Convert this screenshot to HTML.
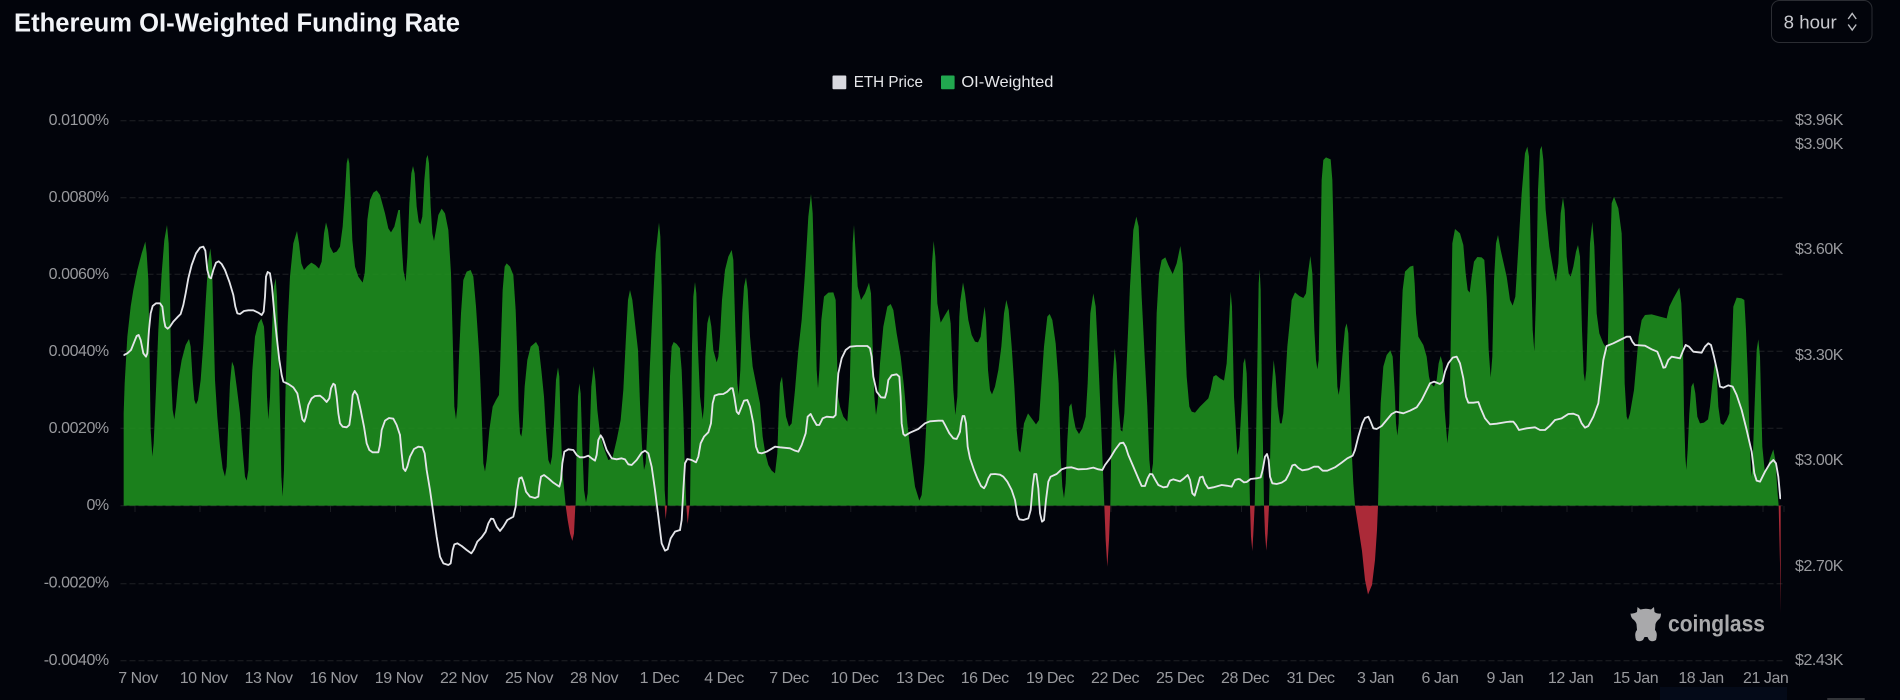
<!DOCTYPE html>
<html lang="en">
<head>
<meta charset="utf-8">
<title>Ethereum OI-Weighted Funding Rate</title>
<style>
html,body{margin:0;padding:0;width:1900px;height:700px;overflow:hidden;background:#02040b}
svg{display:block;position:absolute;left:0;top:0}
text{font-family:"Liberation Sans",sans-serif}
.ax{font-size:16px;fill:#98999d;letter-spacing:-.45px}
.ym{text-anchor:end}
.xm{text-anchor:middle}
.g{fill:#1f8e1f;fill-opacity:.9}
.r{fill:#ab2a39}
.w{fill:none;stroke:#e4e5e9;stroke-width:5.500;stroke-linejoin:round;stroke-linecap:round}
</style>
</head>
<body>
<svg width="1900" height="700" viewBox="0 0 1900 700" xmlns="http://www.w3.org/2000/svg">
<defs><filter id="soft" x="0" y="0" width="100%" height="100%"><feGaussianBlur stdDeviation="0.35"/></filter></defs>

<rect x="1660" y="687" width="127" height="13" fill="#040a18"/>
<rect x="1827" y="698" width="38" height="2" rx="1" fill="#333539"/>

<text x="14" y="31.700" font-size="25.500" font-weight="700" fill="#f2f4f8" textLength="446" lengthAdjust="spacingAndGlyphs">Ethereum OI-Weighted Funding Rate</text>

<rect x="1771.500" y="0.500" width="100.500" height="42" rx="8" fill="none" stroke="#2b2d33"/>
<text x="1783.700" y="28.300" font-size="18.500" fill="#c8c9ce" textLength="53" lengthAdjust="spacingAndGlyphs">8 hour</text>
<path d="M1848.200 19l4-5.500 4 5.500M1848.200 24.500l4 5.500 4-5.500" fill="none" stroke="#bcbdc2" stroke-width="1.400"/>

<rect x="832.500" y="75.500" width="13.800" height="13.800" rx="1" fill="#d9dae0"/>
<text x="853.700" y="87" font-size="16" fill="#e6e7ea" textLength="69.300" lengthAdjust="spacingAndGlyphs">ETH Price</text>
<rect x="941" y="75.500" width="13.600" height="13.800" rx="1" fill="#21a84f"/>
<text x="961.400" y="87" font-size="16" fill="#e6e7ea" textLength="92" lengthAdjust="spacingAndGlyphs">OI-Weighted</text>

<g fill="none" stroke="#1e2025" stroke-width="1" stroke-dasharray="6 3">
<path d="M120.500 120.700H1784.500"/><path d="M120.500 197.700H1784.500"/><path d="M120.500 274.300H1784.500"/><path d="M120.500 351.300H1784.500"/><path d="M120.500 428.300H1784.500"/><path d="M120.500 505.700H1784.500"/><path d="M120.500 583.700H1784.500"/><path d="M120.500 660.700H1784.500"/>
</g>
<path fill="none" stroke="#1a1c21" stroke-width="1" d="M135 506v6M200 506v6M265 506v6M330.500 506v6M395.500 506v6M460.500 506v6M525.500 506v6M590.500 506v6M655.500 506v6M720.700 506v6M785.700 506v6M850.800 506v6M915.900 506v6M981 506v6M1046 506v6M1111 506v6M1176 506v6M1241.500 506v6M1306.500 506v6M1371.500 506v6M1436.700 506v6M1501.700 506v6M1567 506v6M1632 506v6M1697 506v6M1763 506v6M1784 506v6"/>

<g filter="url(#soft)">
<g transform="translate(120,130) scale(.33333)">
<polygon class="g" points="11,1127 11,850 14,760 22,620 32,530 40,480 52,420 65,370 76,335 80,370 85,450 89,700 92,900 97,980 101,940 108,780 115,600 125,430 133,330 141,285 146,340 150,500 154,750 158,840 163,868 168,830 175,750 185,690 197,645 207,627 212,650 218,750 223,810 228,823 234,810 242,750 250,640 258,500 265,390 271,355 276,400 280,560 285,750 292,860 300,950 308,1015 315,1040 320,1010 324,900 330,760 336,695 342,710 350,770 360,850 368,960 375,1040 380,1052 385,1020 390,880 397,720 405,620 415,580 424,566 432,590 437,680 441,800 445,868 450,800 456,600 462,470 467,445 471,500 476,680 480,850 484,1040 488,1100 492,1020 497,760 503,580 510,440 520,340 531,303 537,340 544,400 552,420 562,408 574,398 586,405 597,416 605,395 612,310 618,277 624,300 630,350 640,369 650,365 660,350 668,290 675,190 680,100 684,82 688,100 692,200 697,330 705,410 715,440 728,458 734,430 738,370 742,270 750,210 760,188 770,181 780,195 795,250 805,295 813,307 823,290 835,240 840,240 840,1127"/>
</g>
<g transform="translate(400,130) scale(.33333)">
<polygon class="g" points="0,1127 0,247 5,340 10,420 17,455 22,380 28,220 34,130 39,108 44,130 50,230 56,275 61,283 67,260 73,150 79,85 83,75 87,100 92,230 97,310 102,333 108,300 115,255 125,236 135,250 145,300 153,430 158,620 163,830 168,868 172,830 177,680 183,550 190,450 200,425 212,420 220,440 228,530 238,680 245,850 250,1000 255,1025 260,990 268,900 278,830 288,810 297,795 300,720 308,480 314,410 320,400 330,410 340,435 347,540 352,680 356,840 360,910 364,920 368,890 374,770 382,690 392,650 408,636 416,650 424,720 432,800 438,900 445,990 451,1005 456,980 462,880 468,750 474,712 478,740 482,880 487,1020 493,1085 497,1127 527,1127 530,950 534,800 538,760 542,790 547,950 552,1080 558,1118 563,1090 568,950 574,770 581,708 586,750 592,840 600,910 610,950 625,990 637,985 650,930 662,870 670,780 678,620 684,510 690,480 697,510 706,590 714,660 720,820 726,950 732,1020 737,1000 742,900 750,700 758,530 767,370 777,278 781,320 785,470 790,830 794,1080 797,1127 803,1127 806,900 810,740 815,650 821,636 830,642 840,655 840,1127"/>
<polygon class="r" points="497,1127 503,1170 510,1210 517,1233 522,1210 526,1127"/>
<polygon class="r" points="794,1127 797,1168 801,1127"/>
</g>
<g transform="translate(680,130) scale(.33333)">
<polygon class="g" points="0,1127 0,660 5,720 10,850 14,1000 19,1127 30,1127 33,900 36,650 40,500 45,456 49,490 54,660 60,800 68,868 72,830 76,680 82,580 88,554 94,590 100,660 110,697 115,680 120,620 126,510 135,420 145,380 155,360 160,390 166,600 172,760 176,795 181,720 187,550 192,470 198,442 203,480 210,620 218,710 228,760 240,820 248,920 256,970 265,1005 275,1022 285,1030 292,970 296,850 300,760 306,740 311,790 318,860 327,890 335,880 345,780 355,660 365,570 375,430 385,260 393,192 398,250 404,470 410,720 414,775 418,720 424,570 432,500 445,488 460,487 467,510 471,680 474,800 480,830 490,860 502,875 509,780 513,600 518,340 522,285 527,370 533,470 543,510 555,490 567,458 573,490 578,650 583,800 588,855 593,820 600,700 610,590 622,530 632,522 640,540 650,610 662,680 672,770 682,880 692,970 705,1070 718,1112 725,1095 733,1000 742,820 750,600 756,400 761,333 766,380 772,520 782,578 795,555 806,537 812,580 820,780 826,855 832,800 838,560 840,530 840,1127"/>
<polygon class="r" points="19,1127 23,1182 29,1127"/>
</g>
<g transform="translate(960,130) scale(.33333)">
<polygon class="g" points="0,1127 0,520 9,457 15,490 25,570 35,615 45,635 54,637 62,620 68,570 74,530 78,570 84,720 90,780 96,793 105,770 115,720 124,650 132,550 139,510 146,540 155,650 163,770 170,900 176,960 181,968 186,930 192,880 204,850 215,865 228,883 237,870 243,780 252,650 262,560 269,552 277,570 287,640 296,760 302,980 307,1070 312,1105 317,1060 322,930 328,830 334,820 340,860 347,895 357,912 367,895 377,860 383,760 391,550 400,490 407,530 414,670 422,850 428,1000 433,1127 451,1127 453,1000 458,750 464,655 469,700 475,820 482,900 487,905 493,850 500,700 510,470 520,300 529,260 536,290 545,500 555,700 562,830 568,990 573,1040 579,1000 584,800 590,550 597,430 605,390 616,382 625,405 638,432 650,400 661,348 668,400 674,600 680,740 688,830 695,845 705,848 720,830 745,805 752,780 760,740 768,735 780,745 792,752 800,700 808,560 812,485 816,530 822,800 832,975 838,950 840,910 840,1127"/>
<polygon class="r" points="433,1127 437,1230 442,1310 447,1230 451,1127"/>
</g>
<g transform="translate(1240,130) scale(.33333)">
<polygon class="g" points="0,1127 0,910 5,820 10,700 15,684 20,730 25,900 30,1127 44,1127 47,1000 52,700 56,460 59,418 62,480 66,800 70,1000 72,1127 87,1127 90,1000 95,780 101,690 107,740 113,830 120,880 125,880 130,850 136,750 142,650 150,570 155,510 165,487 178,498 190,504 198,490 204,430 211,378 217,430 223,600 228,690 232,718 236,690 241,400 245,150 250,90 258,82 272,88 277,150 283,400 288,650 292,770 296,795 300,770 307,680 315,595 320,580 325,610 330,800 335,960 340,1060 345,1127 414,1127 417,1000 422,820 430,710 440,675 451,661 458,680 464,780 468,880 472,917 476,880 480,680 488,480 495,425 510,410 520,407 524,460 528,550 535,620 550,645 560,680 567,740 572,760 582,770 590,750 596,700 602,678 608,700 614,840 622,940 628,880 632,650 637,340 645,297 660,310 670,345 677,430 683,480 689,488 695,440 702,395 712,381 725,382 733,390 740,500 746,660 752,743 757,680 762,450 768,340 774,315 782,360 800,440 810,510 810,1127"/>
<polygon class="r" points="30,1127 33,1220 37,1263 40,1210 44,1127"/>
<polygon class="r" points="72,1127 75,1210 79,1262 83,1210 87,1127"/>
</g>
<polygon class="r" points="1355,505.700 1358,525 1362,551 1365,580 1368,594.500 1372,585 1375,560 1377,530 1378,505.700"/>
<g transform="translate(1510,130) scale(.33333)">
<polygon class="g" points="0,1127 0,510 8,527 16,500 24,370 35,190 45,70 52,50 57,80 63,400 68,600 73,665 78,500 84,180 90,60 95,48 100,90 107,240 118,350 130,420 138,455 145,400 152,250 159,203 164,240 170,380 176,430 182,440 190,410 198,365 204,345 210,380 216,600 221,730 225,755 229,720 234,550 240,340 247,275 253,350 260,550 268,610 280,640 293,660 300,400 305,220 312,200 325,235 335,310 340,500 344,760 350,860 354,870 360,850 372,780 380,690 386,620 395,570 405,555 425,553 450,560 470,565 478,530 490,505 508,473 514,520 519,650 522,850 526,980 529,1020 533,960 538,850 544,770 550,758 556,790 562,860 570,880 582,878 594,868 600,830 607,760 614,700 620,730 625,830 632,880 640,885 650,870 658,850 664,700 670,530 680,503 695,505 703,510 708,600 714,750 720,960 724,1040 728,1000 733,850 740,660 745,628 750,680 757,950 764,1020 772,1015 780,985 790,958 796,990 802,1080 806,1127"/>
<polygon class="r" points="806,1127 812,1127 812,1449 810,1300"/>
</g>

<g transform="translate(120,130) scale(.33333)"><polyline class="w" points="12,675 22,670 33,660 43,635 50,618 56,615 62,630 70,670 78,680 82,670 87,600 92,550 98,528 108,520 120,520 127,530 132,570 136,590 143,596 150,590 160,575 172,562 182,552 190,525 197,490 205,445 215,405 228,370 240,353 250,350 256,362 262,420 268,442 273,445 280,420 288,398 296,394 305,402 315,420 328,455 340,495 346,530 352,550 360,552 372,543 385,541 400,541 415,548 425,555 431,545 435,500 438,440 443,426 450,430 456,470 462,540 470,620 478,690 485,735 490,755 505,762 520,772 532,790 540,830 547,868 553,875 558,860 565,825 575,805 585,798 600,797 610,805 620,816 628,805 633,775 640,761 645,765 650,800 655,850 660,880 668,890 680,892 688,885 693,850 698,795 704,783 712,795 722,840 732,890 740,940 748,960 758,967 775,967 780,945 785,900 795,872 807,864 820,866 830,885 840,915"/></g>
<g transform="translate(400,130) scale(.33333)"><polyline class="w" points="0,915 5,970 10,1015 16,1023 22,1010 30,980 42,957 55,950 67,952 74,970 80,1020 90,1080 100,1150 110,1220 120,1280 130,1300 145,1305 152,1300 158,1260 163,1243 172,1240 185,1248 200,1260 214,1270 222,1258 232,1235 245,1222 257,1205 265,1180 273,1166 280,1167 290,1190 300,1203 310,1190 322,1170 340,1160 347,1130 352,1080 358,1045 365,1042 370,1055 378,1085 390,1100 405,1104 415,1100 418,1070 423,1040 432,1035 445,1045 460,1058 478,1070 483,1050 487,1000 493,965 505,958 520,960 530,975 540,982 552,982 565,977 575,985 585,992 590,975 595,930 602,916 608,925 620,960 635,985 650,988 665,985 675,988 685,1003 695,1005 710,990 725,968 735,962 745,970 755,1010 765,1080 775,1160 785,1240 795,1262 803,1258 812,1225 825,1205 840,1200"/></g>
<g transform="translate(680,130) scale(.33333)"><polyline class="w" points="0,1200 5,1170 10,1080 15,1000 22,987 35,990 48,997 55,980 62,940 72,920 85,907 93,880 98,820 104,797 115,793 130,792 142,785 152,775 158,775 163,800 170,845 176,852 183,835 192,812 202,810 210,830 220,880 228,950 235,968 245,970 260,965 272,958 285,950 300,952 330,955 345,962 355,965 365,945 377,910 383,860 392,852 400,868 410,885 418,885 428,865 440,860 460,862 467,855 470,800 475,730 485,685 497,660 510,650 530,648 562,648 570,655 575,680 580,740 590,785 603,802 615,803 620,785 625,750 635,736 650,733 658,740 662,800 665,880 670,912 675,917 690,908 715,897 735,880 750,874 775,872 788,872 795,885 808,910 820,925 830,927 838,910 840,905"/></g>
<g transform="translate(960,130) scale(.33333)"><polyline class="w" points="0,905 3,880 8,858 13,858 18,880 23,950 30,985 42,1020 52,1045 63,1068 72,1075 78,1065 85,1045 92,1033 105,1032 120,1034 130,1040 142,1055 155,1080 165,1110 172,1155 178,1168 190,1170 205,1165 212,1140 218,1070 223,1032 229,1032 235,1075 240,1150 246,1175 252,1170 258,1110 265,1055 272,1040 290,1032 305,1018 320,1013 335,1012 355,1018 380,1017 400,1013 415,1018 427,1020 435,1005 450,985 465,960 480,940 490,938 497,950 505,975 520,1010 535,1045 545,1068 555,1068 563,1045 570,1032 577,1033 585,1048 595,1065 610,1072 622,1070 630,1052 640,1048 660,1054 672,1045 683,1035 690,1050 697,1090 704,1097 712,1070 720,1042 728,1040 735,1060 745,1075 760,1072 785,1065 800,1067 815,1070 825,1050 835,1047 840,1048"/></g>
<g transform="translate(1240,130) scale(.33333)"><polyline class="w" points="0,1048 12,1057 20,1056 32,1047 50,1045 62,1042 68,1020 75,980 81,972 86,990 90,1040 97,1060 110,1062 125,1058 137,1050 148,1030 157,1006 165,1004 175,1014 187,1021 205,1018 222,1010 235,1010 248,1022 262,1022 285,1012 305,998 322,985 338,977 345,960 355,920 367,880 375,864 385,860 392,875 400,895 410,897 425,888 440,870 455,852 468,845 490,850 510,842 530,832 545,810 560,780 570,760 582,755 600,762 608,755 615,725 625,700 638,683 650,680 660,700 670,745 678,800 685,818 700,818 715,816 722,835 735,865 750,883 770,881 800,876 810,875"/></g>
<g transform="translate(1510,130) scale(.33333)"><polyline class="w" points="0,875 10,875 18,885 27,900 50,895 75,892 90,900 105,900 120,887 135,870 155,865 175,852 190,851 205,857 215,880 225,893 235,888 250,860 265,820 272,760 280,690 290,648 310,640 330,630 350,620 360,620 367,635 375,645 405,647 425,658 442,665 452,690 460,713 466,712 475,690 485,680 510,685 518,665 527,645 537,650 550,665 575,668 585,650 595,640 603,645 612,680 622,725 630,770 640,773 655,766 668,770 680,795 695,840 710,900 725,965 733,1030 740,1052 750,1055 765,1025 780,1000 790,990 798,1000 805,1040 811,1105"/></g>
</g>

<g class="ax ym">
<text x="108.700" y="125">0.0100%</text>
<text x="108.700" y="202">0.0080%</text>
<text x="108.700" y="279">0.0060%</text>
<text x="108.700" y="356">0.0040%</text>
<text x="108.700" y="433">0.0020%</text>
<text x="108.700" y="510">0%</text>
<text x="108.700" y="587.500">-0.0020%</text>
<text x="108.700" y="665">-0.0040%</text>
</g>
<g class="ax">
<text x="1795" y="125">$3.96K</text>
<text x="1795" y="149">$3.90K</text>
<text x="1795" y="254">$3.60K</text>
<text x="1795" y="360">$3.30K</text>
<text x="1795" y="465">$3.00K</text>
<text x="1795" y="571">$2.70K</text>
<text x="1795" y="665">$2.43K</text>
</g>
<g class="ax xm">
<text x="138" y="683">7 Nov</text>
<text x="203.700" y="683">10 Nov</text>
<text x="268.600" y="683">13 Nov</text>
<text x="333.500" y="683">16 Nov</text>
<text x="398.800" y="683">19 Nov</text>
<text x="464" y="683">22 Nov</text>
<text x="529" y="683">25 Nov</text>
<text x="594" y="683">28 Nov</text>
<text x="659.400" y="683">1 Dec</text>
<text x="724" y="683">4 Dec</text>
<text x="789" y="683">7 Dec</text>
<text x="854.500" y="683">10 Dec</text>
<text x="920" y="683">13 Dec</text>
<text x="984.700" y="683">16 Dec</text>
<text x="1050" y="683">19 Dec</text>
<text x="1115" y="683">22 Dec</text>
<text x="1180" y="683">25 Dec</text>
<text x="1245" y="683">28 Dec</text>
<text x="1310.600" y="683">31 Dec</text>
<text x="1375.500" y="683">3 Jan</text>
<text x="1440" y="683">6 Jan</text>
<text x="1505" y="683">9 Jan</text>
<text x="1570.600" y="683">12 Jan</text>
<text x="1635.500" y="683">15 Jan</text>
<text x="1701" y="683">18 Jan</text>
<text x="1765.700" y="683">21 Jan</text>
</g>

<path fill="#a9a9ab" d="M1630.500 613.500 Q1634 614 1637 612 L1637.500 607 L1640.500 609.500 Q1646 608 1651 609.500 L1654 607 L1654.500 612 Q1657 614 1661 613.500 Q1661 618.500 1658 620 Q1656 622 1655.500 624 L1655 630 Q1658 633 1656 640 Q1652 642.500 1649 640 L1647.500 637 L1644.500 637 L1643 640 Q1639 642.500 1636 640 Q1634 633 1637 630 L1636.500 624 Q1636 622 1634 620 Q1631 618.500 1630.500 613.500 Z"/>
<text x="1668" y="631.700" font-size="23.500" font-weight="700" fill="#a9a9ab" textLength="97" lengthAdjust="spacingAndGlyphs">coinglass</text>
</svg>
</body>
</html>
